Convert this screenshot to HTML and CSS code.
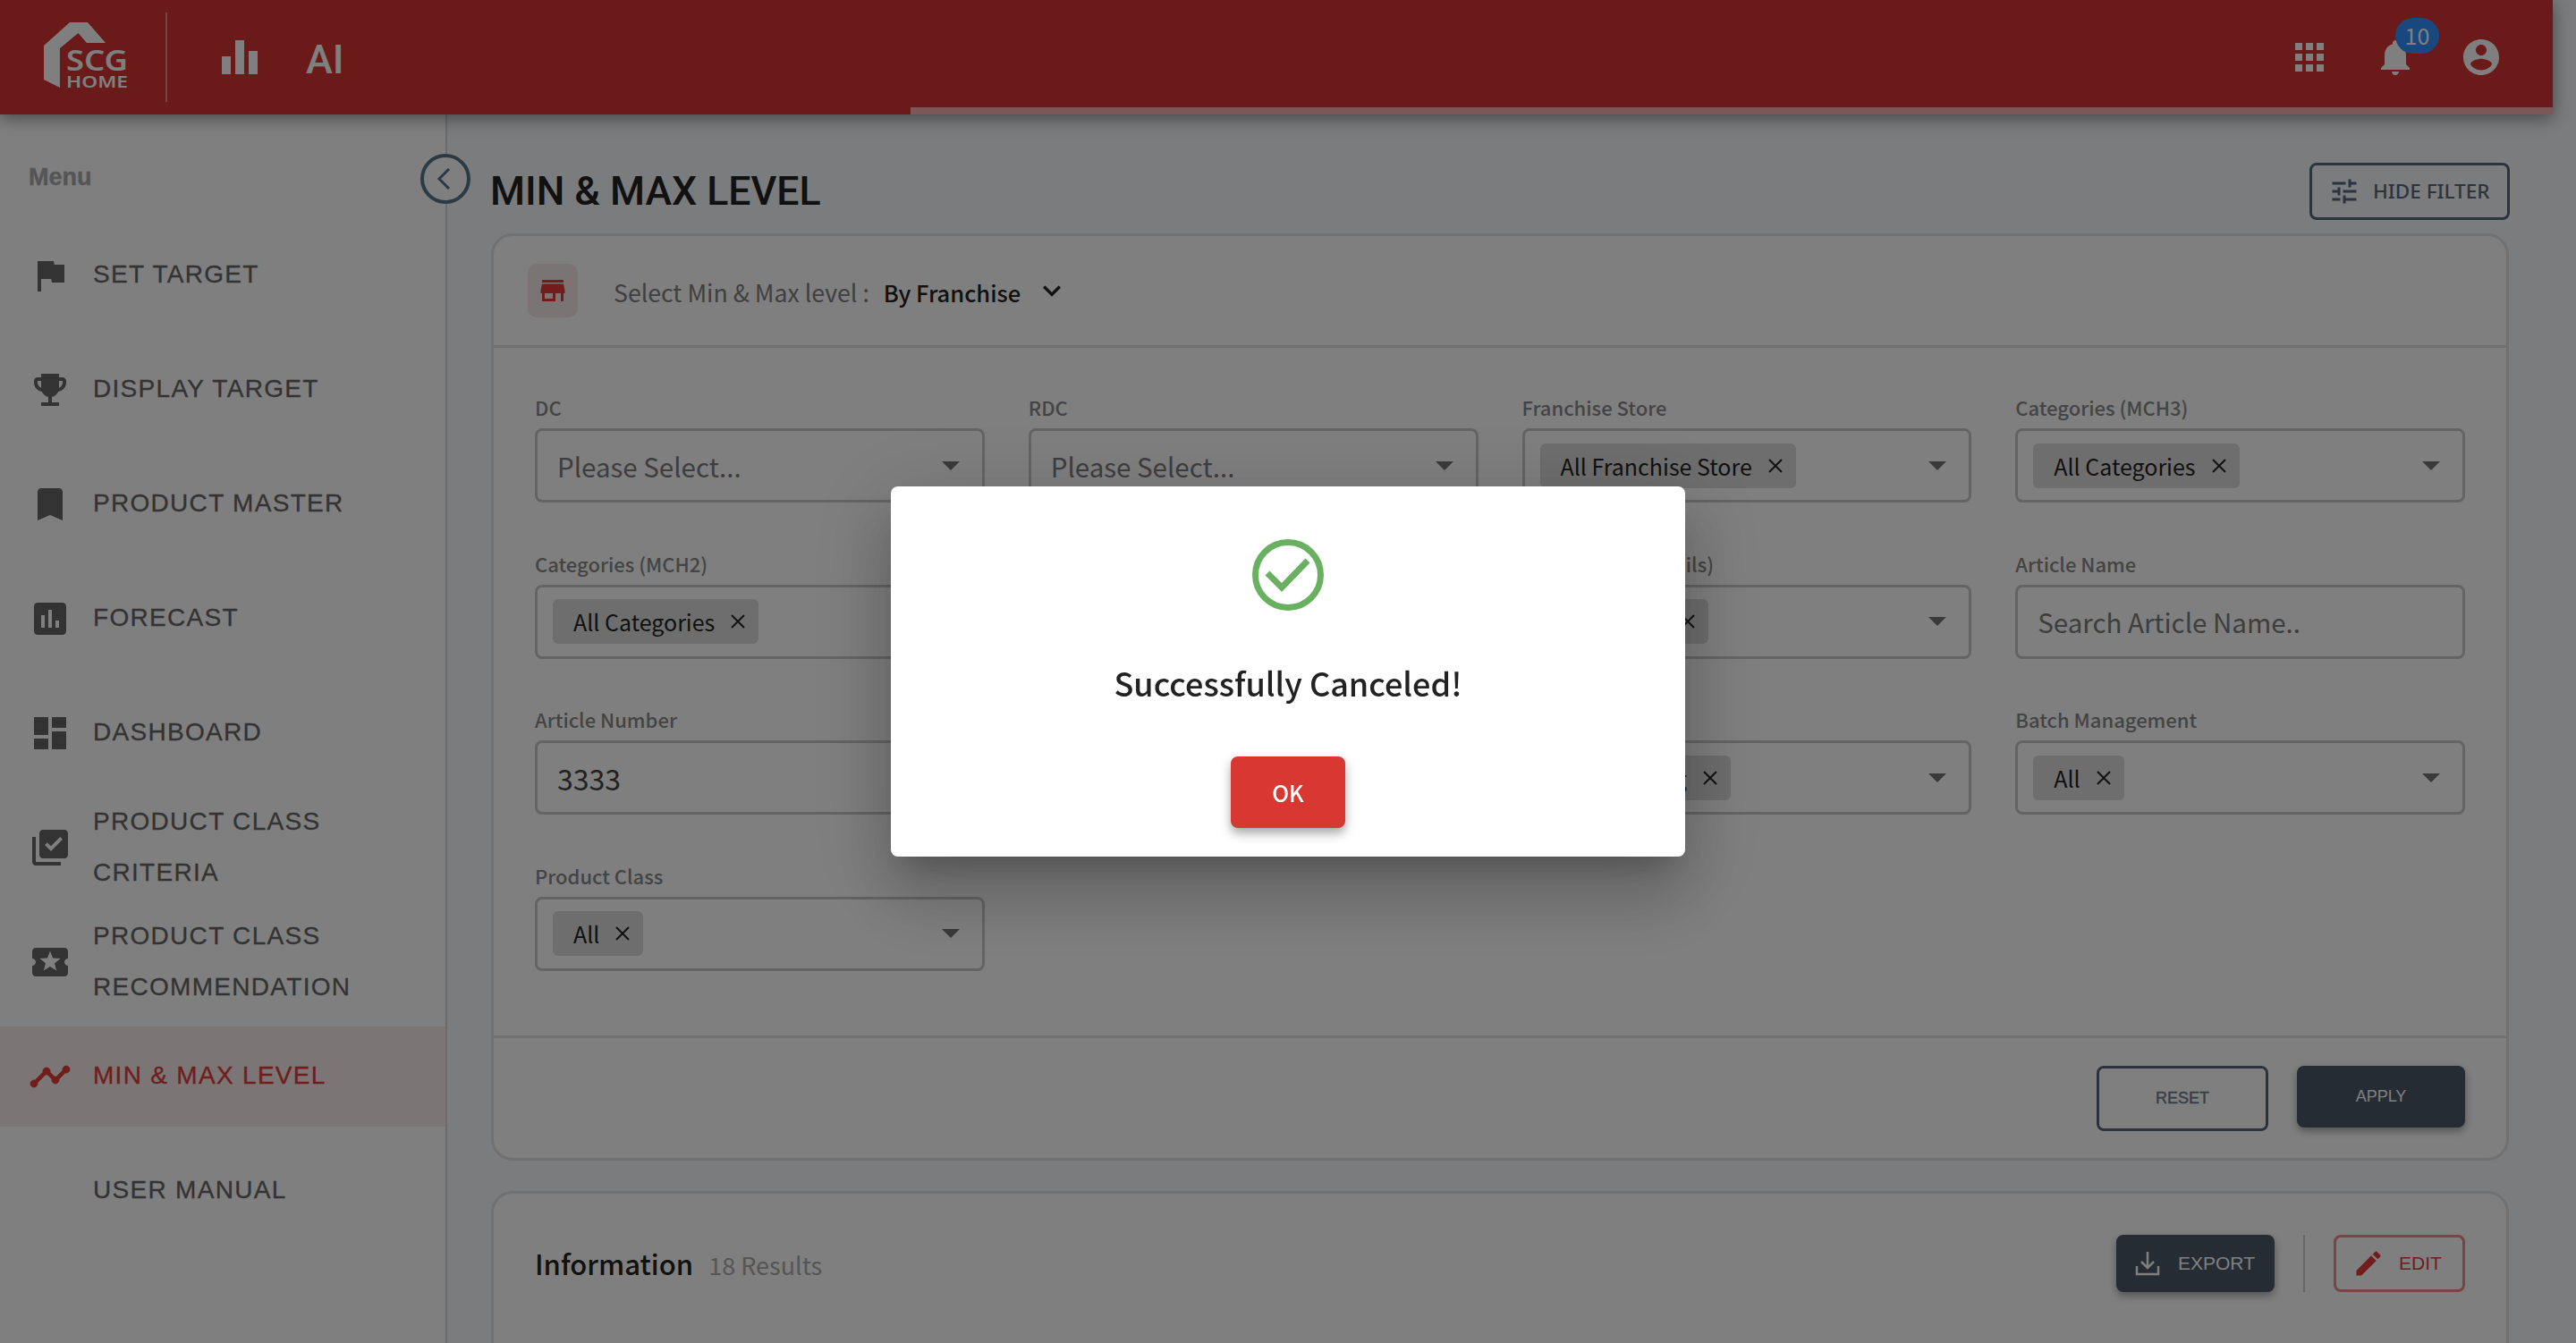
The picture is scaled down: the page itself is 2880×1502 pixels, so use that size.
FILE: index.html
```html
<!DOCTYPE html>
<html>

<head>
	<title>Min &amp; Max Level</title>
	<link rel="stylesheet" href="styles.css">
</head>

<body>
	<header class="topbar">
		<div class="topbar-row">
			<svg class="logo" viewBox="49 24 94 78">
				<polygon fill="#fff" points="49,50 78,24 98,24 118,47 97,47 87.5,36 67,53 67,97 49,88"/>
				<text x="74" y="78" class="logo-scg" textLength="69" lengthAdjust="spacingAndGlyphs">SCG</text>
				<text x="74" y="97" class="logo-home" textLength="69" lengthAdjust="spacingAndGlyphs">HOME</text>
			</svg>
			<span class="topbar-line"></span>
			<svg class="bars-icon" viewBox="0 0 40 38"><path d="M0 18h10v20H0zM15 0h10v38H15zM30 12h10v26H30z"/></svg>
			<span class="topbar-ai">AI</span>
			<div class="topbar-right">
				<svg class="top-icon" viewBox="0 0 24 24"><path d="M4 8h4V4H4v4zm6 12h4v-4h-4v4zm-6 0h4v-4H4v4zm0-6h4v-4H4v4zm6 0h4v-4h-4v4zm6-10v4h4V4h-4zm-6 4h4V4h-4v4zm6 6h4v-4h-4v4zm0 6h4v-4h-4v4z"/></svg>
				<div class="bell">
					<svg class="top-icon" viewBox="0 0 24 24"><path d="M12 22c1.1 0 2-.9 2-2h-4c0 1.1.89 2 2 2zm6-6v-5c0-3.07-1.64-5.64-4.5-6.32V4c0-.83-.67-1.5-1.5-1.5s-1.5.67-1.5 1.5v.68C7.63 5.36 6 7.92 6 11v5l-2 2v1h16v-1l-2-2z"/></svg>
					<span class="badge">10</span>
				</div>
				<svg class="top-icon" viewBox="0 0 24 24"><path d="M12 2C6.48 2 2 6.48 2 12s4.48 10 10 10 10-4.48 10-10S17.52 2 12 2zm0 3c1.66 0 3 1.34 3 3s-1.34 3-3 3-3-1.34-3-3 1.34-3 3-3zm0 14.2c-2.5 0-4.71-1.28-6-3.22.03-1.99 4-3.08 6-3.08 1.99 0 5.97 1.09 6 3.08-1.29 1.94-3.5 3.22-6 3.22z"/></svg>
			</div>
		</div>
		<div class="topbar-strip"></div>
	</header>

	<div class="layout">
		<aside class="sidebar">
			<div class="menu-title">Menu</div>
			<nav class="nav">
				<a class="nav-item" href="#">
					<svg class="nav-icon" viewBox="0 0 24 24"><path d="M14.4 6L14 4H5v17h2v-7h5.6l.4 2h7V6z"/></svg>
					<span>SET TARGET</span>
				</a>
				<a class="nav-item" href="#">
					<svg class="nav-icon" viewBox="0 0 24 24"><path d="M19 5h-2V3H7v2H5c-1.1 0-2 .9-2 2v1c0 2.55 1.92 4.63 4.39 4.94.63 1.5 1.98 2.63 3.61 2.96V19H7v2h10v-2h-4v-3.1c1.63-.33 2.98-1.46 3.61-2.96C19.08 12.63 21 10.55 21 8V7c0-1.1-.9-2-2-2zM5 8V7h2v3.82C5.84 10.4 5 9.3 5 8zm14 0c0 1.3-.84 2.4-2 2.82V7h2v1z"/></svg>
					<span>DISPLAY TARGET</span>
				</a>
				<a class="nav-item" href="#">
					<svg class="nav-icon" viewBox="0 0 24 24"><path d="M17 3H7c-1.1 0-1.99.9-1.99 2L5 21l7-3 7 3V5c0-1.1-.9-2-2-2z"/></svg>
					<span>PRODUCT MASTER</span>
				</a>
				<a class="nav-item" href="#">
					<svg class="nav-icon" viewBox="0 0 24 24"><path d="M19 3H5c-1.1 0-2 .9-2 2v14c0 1.1.9 2 2 2h14c1.1 0 2-.9 2-2V5c0-1.1-.9-2-2-2zM9 17H7v-7h2v7zm4 0h-2V7h2v10zm4 0h-2v-4h2v4z"/></svg>
					<span>FORECAST</span>
				</a>
				<a class="nav-item" href="#">
					<svg class="nav-icon" viewBox="0 0 24 24"><path d="M3 13h8V3H3v10zm0 8h8v-6H3v6zm10 0h8V11h-8v10zm0-18v6h8V3h-8z"/></svg>
					<span>DASHBOARD</span>
				</a>
				<a class="nav-item" href="#">
					<svg class="nav-icon" viewBox="0 0 24 24"><path d="M20 2H8c-1.1 0-2 .9-2 2v12c0 1.1.9 2 2 2h12c1.1 0 2-.9 2-2V4c0-1.1-.9-2-2-2zm-7.53 12L9 10.5l1.4-1.41 2.07 2.08L17.6 6 19 7.41 12.47 14zM4 6H2v14c0 1.1.9 2 2 2h14v-2H4V6z"/></svg>
					<span>PRODUCT CLASS CRITERIA</span>
				</a>
				<a class="nav-item" href="#">
					<svg class="nav-icon" viewBox="0 0 24 24"><path d="M20 12c0-1.1.9-2 2-2V6c0-1.1-.9-2-2-2H4c-1.1 0-1.99.9-1.99 2v4c1.1 0 1.99.9 1.99 2s-.89 2-2 2v4c0 1.1.9 2 2 2h16c1.1 0 2-.9 2-2v-4c-1.1 0-2-.9-2-2zm-4.42 4.8L12 14.5l-3.58 2.3 1.08-4.12-3.29-2.69 4.24-.25L12 5.8l1.54 3.95 4.24.25-3.29 2.69 1.09 4.11z"/></svg>
					<span>PRODUCT CLASS RECOMMENDATION</span>
				</a>
				<a class="nav-item nav-active" href="#">
					<svg class="nav-icon nav-line" viewBox="0 0 24 24"><path d="M23 8c0 1.1-.9 2-2 2-.18 0-.35-.02-.51-.07l-3.56 3.55c.05.16.07.34.07.52 0 1.1-.9 2-2 2s-2-.9-2-2c0-.18.02-.36.07-.52l-2.55-2.55c-.16.05-.34.07-.52.07s-.36-.02-.52-.07l-4.55 4.56c.05.16.07.33.07.51 0 1.1-.9 2-2 2s-2-.9-2-2 .9-2 2-2c.18 0 .35.02.51.07l4.56-4.55C8.02 9.36 8 9.18 8 9c0-1.1.9-2 2-2s2 .9 2 2c0 .18-.02.36-.07.52l2.55 2.55c.16-.05.34-.07.52-.07s.36.02.52.07l3.55-3.56C19.02 8.35 19 8.18 19 8c0-1.1.9-2 2-2s2 .9 2 2z"/></svg>
					<span>MIN &amp; MAX LEVEL</span>
				</a>
				<a class="nav-item nav-noicon" href="#">
					<span>USER MANUAL</span>
				</a>
			</nav>
		</aside>

		<main class="content">
			<button class="back-btn">
				<svg viewBox="0 0 24 24" width="24" height="24"><polyline points="16,1 5,12 16,23"/></svg>
			</button>

			<div class="title-row">
				<h1 class="page-title">MIN &amp; MAX LEVEL</h1>
				<button class="filter-btn">
					<svg viewBox="0 0 24 24" width="36" height="36"><path d="M3 17v2h6v-2H3zM3 5v2h10V5H3zm10 16v-2h8v-2h-8v-2h-2v6h2zM7 9v2H3v2h4v2h2V9H7zm14 4v-2H11v2h10zm-6-4h2V7h4V5h-4V3h-2v6z"/></svg>
					HIDE FILTER
				</button>
			</div>

			<section class="card filter-card">
				<div class="card-head">
					<span class="store-box">
						<svg viewBox="0 0 24 24" width="36" height="36"><path d="M20 4H4v2h16V4zm1 10v-2l-1-5H4l-1 5v2h1v6h10v-6h4v6h2v-6h1zm-9 4H6v-4h6v4z"/></svg>
					</span>
					<span class="head-label">Select Min &amp; Max level :</span>
					<span class="head-value">By Franchise</span>
					<svg class="head-chevron" viewBox="0 0 24 24" width="40" height="40"><path d="M16.59 8.59L12 13.17 7.41 8.59 6 10l6 6 6-6z"/></svg>
				</div>

				<div class="fields">
					<div class="field">
						<label>DC</label>
						<div class="control"><span class="placeholder">Please Select...</span><i class="caret"></i></div>
					</div>
					<div class="field">
						<label>RDC</label>
						<div class="control"><span class="placeholder">Please Select...</span><i class="caret"></i></div>
					</div>
					<div class="field">
						<label>Franchise Store</label>
						<div class="control">
							<span class="chip">All Franchise Store<svg class="chip-x" viewBox="0 0 16 16"><path d="M1 1L15 15M15 1L1 15"/></svg></span>
							<i class="caret"></i>
						</div>
					</div>
					<div class="field">
						<label>Categories (MCH3)</label>
						<div class="control">
							<span class="chip">All Categories<svg class="chip-x" viewBox="0 0 16 16"><path d="M1 1L15 15M15 1L1 15"/></svg></span>
							<i class="caret"></i>
						</div>
					</div>

					<div class="field">
						<label>Categories (MCH2)</label>
						<div class="control">
							<span class="chip">All Categories<svg class="chip-x" viewBox="0 0 16 16"><path d="M1 1L15 15M15 1L1 15"/></svg></span>
							<i class="caret"></i>
						</div>
					</div>
					<div class="field">
						<label>Categories (MCH1)</label>
						<div class="control">
							<span class="chip">All Categories<svg class="chip-x" viewBox="0 0 16 16"><path d="M1 1L15 15M15 1L1 15"/></svg></span>
							<i class="caret"></i>
						</div>
					</div>
					<div class="field">
						<label>Sales Types (Details)</label>
						<div class="control">
							<span class="chip">All Brands<svg class="chip-x" viewBox="0 0 16 16"><path d="M1 1L15 15M15 1L1 15"/></svg></span>
							<i class="caret"></i>
						</div>
					</div>
					<div class="field">
						<label>Article Name</label>
						<div class="control"><span class="placeholder">Search Article Name..</span></div>
					</div>

					<div class="field">
						<label>Article Number</label>
						<div class="control"><span class="typed">3333</span></div>
					</div>
					<div class="field">
						<label>Status</label>
						<div class="control"><span class="placeholder">Please Select...</span><i class="caret"></i></div>
					</div>
					<div class="field">
						<label>Handling</label>
						<div class="control">
							<span class="chip">All Handling<svg class="chip-x" viewBox="0 0 16 16"><path d="M1 1L15 15M15 1L1 15"/></svg></span>
							<i class="caret"></i>
						</div>
					</div>
					<div class="field">
						<label>Batch Management</label>
						<div class="control">
							<span class="chip">All<svg class="chip-x" viewBox="0 0 16 16"><path d="M1 1L15 15M15 1L1 15"/></svg></span>
							<i class="caret"></i>
						</div>
					</div>

					<div class="field">
						<label>Product Class</label>
						<div class="control">
							<span class="chip">All<svg class="chip-x" viewBox="0 0 16 16"><path d="M1 1L15 15M15 1L1 15"/></svg></span>
							<i class="caret"></i>
						</div>
					</div>
				</div>

				<div class="card-foot">
					<button class="btn-reset">RESET</button>
					<button class="btn-apply">APPLY</button>
				</div>
			</section>

			<section class="card info-card">
				<div class="info-row">
					<span class="info-title">Information</span>
					<span class="info-count">18 Results</span>
					<div class="info-actions">
						<button class="btn-export">
							<svg viewBox="0 0 28 28" width="28" height="28"><path d="M14 1V19M7 12L14 19L21 12M2 17V26H26V17"/></svg>
							EXPORT
						</button>
						<span class="info-line"></span>
						<button class="btn-edit">
							<svg viewBox="0 0 24 24" width="36" height="36"><path d="M3 17.25V21h3.75L17.81 9.94l-3.75-3.75L3 17.25zM20.71 7.04c.39-.39.39-1.02 0-1.41l-2.34-2.34c-.39-.39-1.02-.39-1.41 0l-1.83 1.83 3.75 3.75 1.83-1.83z"/></svg>
							EDIT
						</button>
					</div>
				</div>
			</section>
		</main>
	</div>

	<!-- dialog over the page -->
	<div class="overlay">
		<div class="modal">
			<svg class="modal-check" viewBox="0 0 80 80">
				<circle cx="40" cy="40" r="36.5"/>
				<polyline points="17,38 33,54 62,24"/>
			</svg>
			<div class="modal-title">Successfully Canceled!</div>
			<button class="modal-ok">OK</button>
		</div>
	</div>
</body>

</html>
```

FILE: styles.css
```css
* {box-sizing: border-box;}
html, body {margin: 0; padding: 0;}
body {width: 2880px; height: 1502px; overflow: hidden; background: #f6f8fc; font-family: "Noto Sans CJK SC", "Noto Sans", sans-serif; color: #222;}
button {font-family: inherit; cursor: pointer;}

/* top bar */
.topbar {position: relative; z-index: 2; width: 2854px; height: 128px; background: #d43430; box-shadow: 0 4px 18px rgba(0,0,0,.45);}
.topbar-row {display: flex; align-items: center; height: 120px; padding: 8px 0 0 49px;}
.topbar-strip {height: 8px; margin-left: 1018px; background: #faacb0;}
.logo {width: 94px; height: 78px; margin-top: 0; flex: none;}
.logo-scg {font: 600 32px "Noto Sans", sans-serif; fill: #fff;}
.logo-home {font: 600 18px "Noto Sans", sans-serif; fill: #fff;}
.topbar-line {width: 2px; height: 100px; margin-left: 42px; background: #f08a88;}
.bars-icon {width: 40px; height: 38px; margin-left: 61px; fill: #fff;}
.topbar-ai {margin: 5px 0 0 54px; font: 500 45px Roboto, sans-serif; color: #fff;}
.topbar-right {display: flex; align-items: center; gap: 48px; margin-left: auto; margin-right: 56px;}
.top-icon {display: block; width: 48px; height: 48px; fill: #fff;}
.bell {position: relative;}
.badge {position: absolute; left: 24px; top: -20px; width: 49px; height: 40px; border-radius: 20px; background: #3090ff; color: #fff; font-size: 25px; line-height: 38px; text-align: center;}

/* layout */
.layout {display: flex; height: 1374px;}
.sidebar {width: 500px; flex: none; border-right: 2px solid #d6d6d6; background: #fff;}
.menu-title {height: 124px; padding: 55px 0 0 32px; font: bold 27px "Liberation Sans", sans-serif; -webkit-text-stroke: .4px #aaa; color: #aaa;}
.nav {display: flex; flex-direction: column; gap: 16px;}
.nav-item {display: flex; align-items: center; gap: 24px; height: 112px; padding: 0 24px 0 32px; font: 28px/57px "Liberation Sans", sans-serif; letter-spacing: 1.3px; -webkit-text-stroke: .3px; color: #666; text-decoration: none;}
.nav-item span {margin-top: -3px;}
.nav-icon {width: 48px; height: 48px; flex: none; fill: #666;}
.nav-active {background: #f6ebea; color: #e03a36;}
.nav-active .nav-icon {fill: #e03a36;}
.nav-line {stroke: #e03a36; stroke-width: .4;}
.nav-noicon {padding-left: 104px;}

/* main */
.content {position: relative; flex: 1; min-width: 0; padding: 54px 75px 0 49px;}
.back-btn {position: absolute; left: -30px; top: 44px; display: flex; align-items: center; justify-content: center; width: 56px; height: 56px; padding: 0; border: 4px solid #56748a; border-radius: 50%; background: #fff;}
.back-btn polyline {fill: none; stroke: #56748a; stroke-width: 3;}
.title-row {display: flex; align-items: center; justify-content: space-between; height: 63px; margin-bottom: 16px;}
.page-title {margin: 0 0 0 -1px; font: 500 44.6px Roboto, sans-serif; color: #222;}
.filter-btn {display: flex; align-items: center; gap: 14px; width: 224px; height: 64px; margin-right: -1px; padding: 0 0 0 18px; border: 3px solid #56697d; border-radius: 8px; background: none; font-family: "Noto Sans", sans-serif; font-size: 22.5px; font-weight: 500; color: #56697d; white-space: nowrap;}
.filter-btn svg {fill: #56697d; flex: none;}

.card {border: 3px solid #e2e2e2; border-radius: 24px; background: #fff;}
.filter-card {height: 1037px; margin-bottom: 34px;}
.card-head {display: flex; align-items: center; height: 125px; padding: 0 0 0 38px; border-bottom: 3px solid #e2e2e2;}
.store-box {display: flex; align-items: center; justify-content: center; width: 56px; height: 60px; border-radius: 10px; background: #f4e8e8;}
.store-box svg {fill: #e03a36;}
.head-label {margin: 3px 0 0 40px; font-size: 26.7px; line-height: 36px; color: #808080;}
.head-value {margin: 3px 0 0 16px; font-size: 25.5px; line-height: 36px; font-weight: 500; color: #222;}
.head-chevron {margin: 0 0 0 15px; fill: #222;}

.fields {display: grid; grid-template-columns: repeat(4, 1fr); column-gap: 49px; row-gap: 51.67px; height: 772px; padding: 50px 46px 0 46px; align-content: start; border-bottom: 3px solid #e2e2e2;}
.field label {display: block; height: 32px; margin-bottom: 8px; font-size: 22px; font-weight: 500; line-height: 32px; color: #888;}
.control {display: flex; align-items: center; height: 83px; padding: 0 25px 0 17px; border: 3px solid #c8c8c8; border-radius: 8px; font-size: 29.5px;}
.placeholder {padding-left: 5px; line-height: 40px; color: #7c7c7c;}
.typed {padding-left: 5px; font-size: 32px; line-height: 40px; color: #444;}
.chip {display: flex; align-items: center; height: 50px; padding: 0 15px 0 23px; border-radius: 6px; background: #dcdcdc; font-size: 25px; color: #222; white-space: nowrap;}
.chip-x {width: 16px; height: 16px; margin-left: 18px; fill: none; stroke: #222; stroke-width: 2;}
.caret {width: 0; height: 0; margin-left: auto; border-left: 10px solid transparent; border-right: 10px solid transparent; border-top: 10px solid #757575;}

.card-foot {display: flex; justify-content: flex-end; align-items: flex-start; gap: 32px; padding: 31px 46px 0 0;}
.btn-reset {width: 192px; height: 73px; border: 3px solid #56697d; border-radius: 8px; background: none; font: 18px "Liberation Sans", sans-serif; -webkit-text-stroke: .4px #6e7c88; color: #6e7c88;}
.btn-apply {width: 188px; height: 69px; border: 0; border-radius: 8px; background: #4a5868; box-shadow: 0 4px 10px rgba(0,0,0,.35); font: 18px "Liberation Sans", sans-serif; color: #fff;}

.info-card {height: 300px;}
.info-row {display: flex; align-items: center; height: 64px; margin-top: 46px; padding: 0 46px;}
.info-title {font-size: 31px; line-height: 44px; font-weight: 500; color: #222;}
.info-count {margin: 3px 0 0 17px; font-size: 27px; line-height: 40px; color: #aaa;}
.info-actions {display: flex; align-items: center; gap: 32px; margin-left: auto;}
.btn-export {display: flex; align-items: center; gap: 20px; width: 177px; height: 64px; padding: 0 0 0 21px; border: 0; border-radius: 8px; background: #4a5868; box-shadow: 0 4px 10px rgba(0,0,0,.35); font: 21px "Liberation Sans", sans-serif; color: #fff;}
.btn-export svg {fill: none; stroke: #fff; stroke-width: 2.5; flex: none;}
.info-line {width: 2px; height: 64px; background: #cfcfcf;}
.btn-edit {display: flex; align-items: center; gap: 16px; width: 147px; height: 64px; padding: 0 0 0 18px; border: 3px solid #f08a88; border-radius: 8px; background: none; font: 21px "Liberation Sans", sans-serif; color: #e03a36;}
.btn-edit svg {fill: #e03a36; flex: none;}

/* dialog */
.overlay {position: fixed; left: 0; top: 0; right: 0; bottom: 0; z-index: 5; display: flex; align-items: center; justify-content: center; background: rgba(0,0,0,.5);}
.modal {display: flex; flex-direction: column; align-items: center; width: 888px; height: 414px; padding-top: 59px; border-radius: 8px; background: #fff; box-shadow: 0 22px 30px -14px rgba(0,0,0,.2), 0 48px 76px 6px rgba(0,0,0,.14), 0 18px 92px 16px rgba(0,0,0,.12);}
.modal-check {width: 80px; height: 80px;}
.modal-check circle, .modal-check polyline {fill: none; stroke: #69b061; stroke-width: 7;}
.modal-title {height: 50px; margin: 55px 0 58px; font-size: 36px; font-weight: 500; line-height: 50px; color: #222;}
.modal-ok {width: 128px; height: 80px; border: 0; border-radius: 8px; background: #d93732; box-shadow: 0 6px 12px rgba(0,0,0,.35); font-size: 25px; font-weight: 500; color: #fff;}
```
